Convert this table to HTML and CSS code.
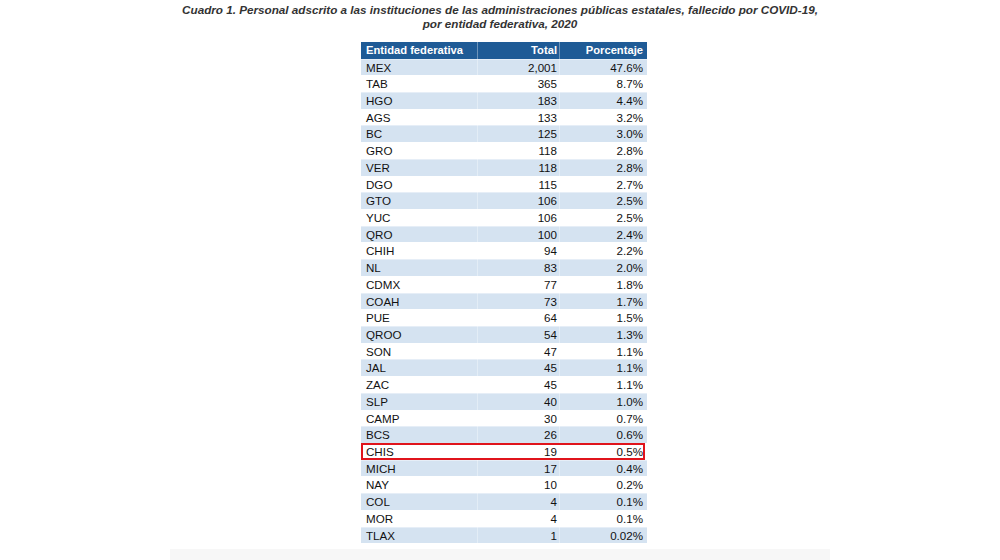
FILE: index.html
```html
<!DOCTYPE html>
<html lang="es">
<head>
<meta charset="utf-8">
<title>Cuadro 1</title>
<link rel="stylesheet" href="styles.css">
</head>
<body>
<div class="page">
  <h1 class="title">Cuadro 1. Personal adscrito a las instituciones de las administraciones públicas estatales, fallecido por COVID-19,<br>por entidad federativa, 2020</h1>
  <div class="table">
    <div class="row head"><div class="c1">Entidad federativa</div><div class="c2">Total</div><div class="c3">Porcentaje</div></div>
    <div class="row odd"><div class="c1">MEX</div><div class="c2">2,001</div><div class="c3">47.6%</div></div>
    <div class="row"><div class="c1">TAB</div><div class="c2">365</div><div class="c3">8.7%</div></div>
    <div class="row odd"><div class="c1">HGO</div><div class="c2">183</div><div class="c3">4.4%</div></div>
    <div class="row"><div class="c1">AGS</div><div class="c2">133</div><div class="c3">3.2%</div></div>
    <div class="row odd"><div class="c1">BC</div><div class="c2">125</div><div class="c3">3.0%</div></div>
    <div class="row"><div class="c1">GRO</div><div class="c2">118</div><div class="c3">2.8%</div></div>
    <div class="row odd"><div class="c1">VER</div><div class="c2">118</div><div class="c3">2.8%</div></div>
    <div class="row"><div class="c1">DGO</div><div class="c2">115</div><div class="c3">2.7%</div></div>
    <div class="row odd"><div class="c1">GTO</div><div class="c2">106</div><div class="c3">2.5%</div></div>
    <div class="row"><div class="c1">YUC</div><div class="c2">106</div><div class="c3">2.5%</div></div>
    <div class="row odd"><div class="c1">QRO</div><div class="c2">100</div><div class="c3">2.4%</div></div>
    <div class="row"><div class="c1">CHIH</div><div class="c2">94</div><div class="c3">2.2%</div></div>
    <div class="row odd"><div class="c1">NL</div><div class="c2">83</div><div class="c3">2.0%</div></div>
    <div class="row"><div class="c1">CDMX</div><div class="c2">77</div><div class="c3">1.8%</div></div>
    <div class="row odd"><div class="c1">COAH</div><div class="c2">73</div><div class="c3">1.7%</div></div>
    <div class="row"><div class="c1">PUE</div><div class="c2">64</div><div class="c3">1.5%</div></div>
    <div class="row odd"><div class="c1">QROO</div><div class="c2">54</div><div class="c3">1.3%</div></div>
    <div class="row"><div class="c1">SON</div><div class="c2">47</div><div class="c3">1.1%</div></div>
    <div class="row odd"><div class="c1">JAL</div><div class="c2">45</div><div class="c3">1.1%</div></div>
    <div class="row"><div class="c1">ZAC</div><div class="c2">45</div><div class="c3">1.1%</div></div>
    <div class="row odd"><div class="c1">SLP</div><div class="c2">40</div><div class="c3">1.0%</div></div>
    <div class="row"><div class="c1">CAMP</div><div class="c2">30</div><div class="c3">0.7%</div></div>
    <div class="row odd"><div class="c1">BCS</div><div class="c2">26</div><div class="c3">0.6%</div></div>
    <div class="row highlight"><div class="c1">CHIS</div><div class="c2">19</div><div class="c3">0.5%</div></div>
    <div class="row odd"><div class="c1">MICH</div><div class="c2">17</div><div class="c3">0.4%</div></div>
    <div class="row"><div class="c1">NAY</div><div class="c2">10</div><div class="c3">0.2%</div></div>
    <div class="row odd"><div class="c1">COL</div><div class="c2">4</div><div class="c3">0.1%</div></div>
    <div class="row"><div class="c1">MOR</div><div class="c2">4</div><div class="c3">0.1%</div></div>
    <div class="row odd"><div class="c1">TLAX</div><div class="c2">1</div><div class="c3">0.02%</div></div>
  </div>
  <div class="footer-strip"></div>
</div>
</body>
</html>
```
FILE: styles.css
```css
html, body {
  margin: 0;
  padding: 0;
  background: #ffffff;
}
.page {
  width: 1000px;
  height: 560px;
  overflow: hidden;
  display: flex;
  flex-direction: column;
  align-items: center;
  font-family: "Liberation Sans", Arial, sans-serif;
  color: #111;
}
.title {
  margin: 3px 0 0 0;
  font-size: 11.7px;
  line-height: 14px;
  font-weight: bold;
  font-style: italic;
  text-align: center;
  color: #333;
}
.table {
  margin-top: 11px;
  margin-left: 8px;
  width: 286px;
  display: flex;
  flex-direction: column;
}
.row {
  display: grid;
  grid-template-columns: 116px 82px 88px;
  height: 16.72px;
  font-size: 11.6px;
  line-height: 17px;
}
.row > div {
  padding: 0 4px 0 5px;
  white-space: nowrap;
}
.row .c2 {
  text-align: right;
  padding-right: 2px;
}
.row .c3 {
  text-align: right;
}
.head {
  background: #1f5b96;
  color: #ffffff;
  font-weight: bold;
  font-size: 11.2px;
  height: 16.5px;
  line-height: 17px;
}
.head .c2, .head .c3,
.odd .c2, .odd .c3 {
  box-shadow: inset 1px 0 0 rgba(255, 255, 255, 0.35);
}
.odd {
  background: #d5e3f1;
  box-shadow: inset 0 1px 0 #e6eef7;
}
.highlight {
  width: 284px;
  outline: 2px solid #e0141c;
  outline-offset: -2px;
}
.footer-strip {
  margin-top: auto;
  width: 660px;
  height: 11px;
  background: #f7f7f7;
}
```
